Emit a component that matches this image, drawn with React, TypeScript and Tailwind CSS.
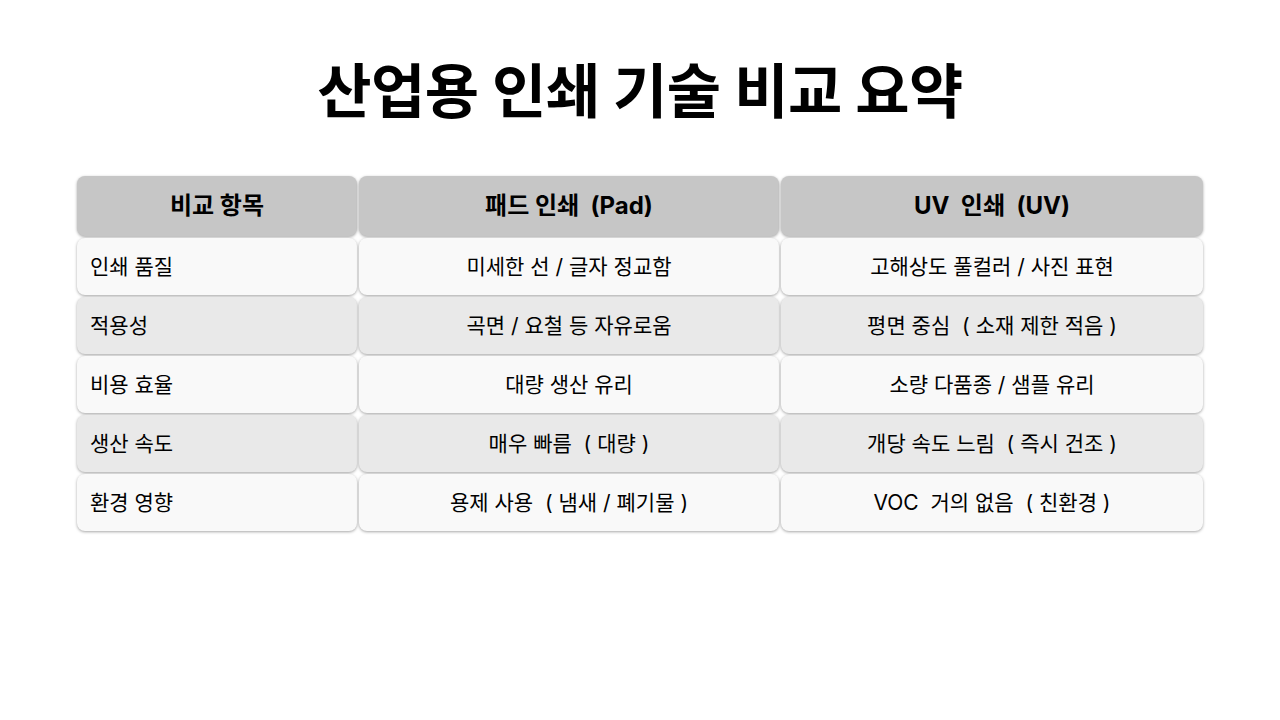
import React from "react";

const ROWS: { label: string; pad: string; uv: string }[] = [
    { label: "인쇄 품질", pad: "미세한 선 / 글자 정교함", uv: "고해상도 풀컬러 / 사진 표현" },
    { label: "적용성", pad: "곡면 / 요철 등 자유로움", uv: "평면 중심  ( 소재 제한 적음 )" },
    { label: "비용 효율", pad: "대량 생산 유리", uv: "소량 다품종 / 샘플 유리" },
    { label: "생산 속도", pad: "매우 빠름  ( 대량 )", uv: "개당 속도 느림  ( 즉시 건조 )" },
    { label: "환경 영향", pad: "용제 사용  ( 냄새 / 폐기물 )", uv: "VOC  거의 없음  ( 친환경 )" },
];

const cell = "rounded-lg shadow-[0_1px_3px_rgba(0,0,0,0.35)] flex items-center whitespace-pre";

export default function App() {
    return (
        <div className="w-[1280px] h-[720px] bg-white text-black font-['Inter','Noto_Sans_CJK_KR',sans-serif] flex flex-col items-center">
            <h1 className="mt-[52px] text-[59px] leading-[80px] font-bold tracking-[-0.5px]">산업용 인쇄 기술 비교 요약</h1>

            <div className="mt-[44px] grid grid-cols-[280px_420px_422px] gap-[2px]">
                <div className={`${cell} h-[60px] bg-[#c6c6c6] justify-center text-[24px] font-bold`}>비교 항목</div>
                <div className={`${cell} h-[60px] bg-[#c6c6c6] justify-center text-[24px] font-bold`}>패드 인쇄  (Pad)</div>
                <div className={`${cell} h-[60px] bg-[#c6c6c6] justify-center text-[24px] font-bold`}>UV  인쇄  (UV)</div>

                {ROWS.map((r, i) => {
                    const bg = i % 2 === 0 ? "bg-[#f9f9f9]" : "bg-[#e9e9e9]";
                    return (
                        <React.Fragment key={r.label}>
                            <div className={`${cell} ${bg} h-[57px] pl-[13px] text-[21px]`}>{r.label}</div>
                            <div className={`${cell} ${bg} h-[57px] justify-center text-[21px]`}>{r.pad}</div>
                            <div className={`${cell} ${bg} h-[57px] justify-center text-[21px]`}>{r.uv}</div>
                        </React.Fragment>
                    );
                })}
            </div>
        </div>
    );
}
